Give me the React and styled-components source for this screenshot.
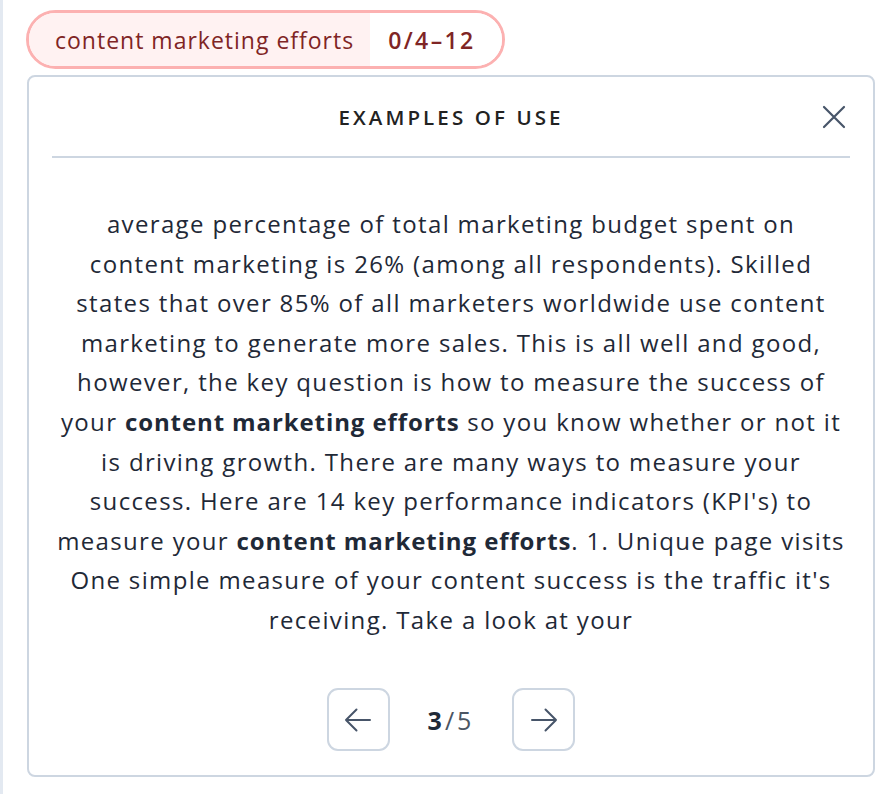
import React from "react";
import styled, { createGlobalStyle } from "styled-components";

const GlobalStyle = createGlobalStyle`
  body {
    margin: 0;
    background: #fff;
    font-family: "Open Sans", "Noto Sans", sans-serif;
  }
`;

const Page = styled.div`
  min-height: 794px;
  box-sizing: border-box;
  border-left: 3px solid #e3e9f1;
  padding: 10px 13px 0 23px;
`;

const Pill = styled.div`
  display: inline-flex;
  align-items: stretch;
  height: 59px;
  box-sizing: border-box;
  border: 3px solid #fcb1b1;
  border-radius: 30px;
  overflow: hidden;
  color: #7f2525;
  font-size: 23px;
  letter-spacing: 1px;
`;

const PillPart = styled.span`
  display: flex;
  align-items: center;
  padding: ${(p) => (p.$count ? "0 26px 0 18px" : "0 16px 0 26px")};
  background: ${(p) => (p.$count ? "#fff" : "#fff2f2")};
  font-weight: ${(p) => (p.$count ? 600 : 400)};
  letter-spacing: ${(p) => (p.$count ? "2.4px" : "1px")};
`;

const Card = styled.div`
  margin: 6px 0 0 1px;
  width: 848px;
  height: 702px;
  box-sizing: border-box;
  border: 2px solid #cdd6e1;
  border-radius: 8px;
  display: flex;
  flex-direction: column;
`;

const Header = styled.div`
  margin: 0 23px;
  height: 79px;
  border-bottom: 2px solid #cdd6e1;
  display: grid;
  grid-template-columns: 1fr auto 1fr;
  align-items: center;
`;

const Title = styled.h2`
  grid-column: 2;
  margin: 0;
  font-size: 20.5px;
  font-weight: 600;
  letter-spacing: 3.1px;
  color: #222;
`;

const CloseButton = styled.button`
  justify-self: end;
  margin-right: 4px;
  border: 0;
  background: none;
  padding: 0;
  display: flex;
  color: #475569;
  cursor: pointer;
`;

const Text = styled.p`
  margin: 46px 8px 0;
  text-align: center;
  white-space: nowrap;
  font-size: 24px;
  line-height: 39.6px;
  letter-spacing: 1.35px;
  color: #1f2937;

  b {
    font-weight: 700;
    letter-spacing: 0.9px;
  }
`;

const Pager = styled.div`
  margin-top: auto;
  margin-bottom: 24px;
  display: flex;
  justify-content: center;
  align-items: center;
  gap: 38px;
`;

const PageButton = styled.button`
  width: 63px;
  height: 63px;
  box-sizing: border-box;
  border: 2px solid #cdd6e1;
  border-radius: 11px;
  background: #fff;
  display: flex;
  align-items: center;
  justify-content: center;
  color: #475569;
  cursor: pointer;
`;

const Count = styled.span`
  font-size: 25px;
  color: #4b5563;
  letter-spacing: 3px;

  b {
    color: #1f2937;
    font-weight: 700;
  }
`;

const Arrow = ({ dir }) => (
  <svg width="28" height="28" viewBox="0 0 28 28" fill="none" stroke="currentColor" strokeWidth="2" strokeLinecap="round" strokeLinejoin="round">
    {dir === "left" ? (
      <path d="M2 14H26M12.5 3.5L2 14L12.5 24.5" />
    ) : (
      <path d="M26 14H2M15.5 3.5L26 14L15.5 24.5" />
    )}
  </svg>
);

const CloseIcon = () => (
  <svg width="24" height="24" viewBox="0 0 24 24" fill="none" stroke="currentColor" strokeWidth="2.2" strokeLinecap="round">
    <path d="M2 2L22 22M22 2L2 22" />
  </svg>
);

export default function App() {
  return (
    <Page>
      <GlobalStyle />
      <Pill>
        <PillPart>content marketing efforts</PillPart>
        <PillPart $count>0/4–12</PillPart>
      </Pill>
      <Card>
        <Header>
          <Title>EXAMPLES OF USE</Title>
          <CloseButton aria-label="Close">
            <CloseIcon />
          </CloseButton>
        </Header>
        <Text>
          average percentage of total marketing budget spent on<br />
          content marketing is 26% (among all respondents). Skilled<br />
          states that over 85% of all marketers worldwide use content<br />
          marketing to generate more sales. This is all well and good,<br />
          however, the key question is how to measure the success of<br />
          your <b>content marketing efforts</b> so you know whether or not it<br />
          is driving growth. There are many ways to measure your<br />
          success. Here are 14 key performance indicators (KPI's) to<br />
          measure your <b>content marketing efforts</b>. 1. Unique page visits<br />
          One simple measure of your content success is the traffic it's<br />
          receiving. Take a look at your
        </Text>
        <Pager>
          <PageButton aria-label="Previous">
            <Arrow dir="left" />
          </PageButton>
          <Count>
            <b>3</b>/5
          </Count>
          <PageButton aria-label="Next">
            <Arrow dir="right" />
          </PageButton>
        </Pager>
      </Card>
    </Page>
  );
}
